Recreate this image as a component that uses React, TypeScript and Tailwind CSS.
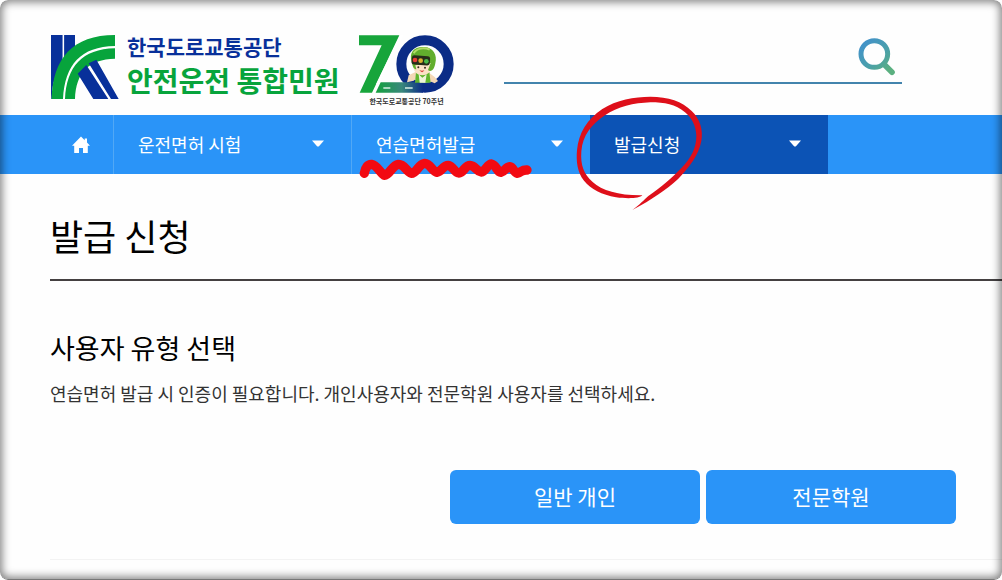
import React from 'react';

function KoroadMark() {
  return (
    <svg viewBox="33 44 204 192" className="h-16 w-[68px] shrink-0" aria-hidden="true">
      <path d="M33 44H67V236H33ZM73 44H105V150H73Z" fill="#08309a" />
      <path d="M35 238C39 120 92 49 229 46V120C150 122 108 160 104 238Z" fill="#fff" />
      <path d="M33 44H67V128C53 153 42 178 33 208ZM73 44H105V84C92 94 82 105 73 118Z" fill="#08309a" />
      <path d="M35 236C38 115 98 44 225 44V77C122 79 75 132 69 236Z" fill="#07a43c" />
      <path d="M75 236C80 139 126 86 225 84V115C146 117 108 156 105 236Z" fill="#07a43c" />
      <path d="M113 160L139 134L205 236H160ZM146 129L169 118L236 236H213Z" fill="#08309a" />
    </svg>
  );
}

function AnniversaryMark() {
  return (
    <svg viewBox="43 42 285 174" className="h-[58px] w-[95px]" aria-hidden="true">
      <defs>
        <linearGradient id="foot" x1="0" x2="1">
          <stop offset="0" stopColor="#12a13c" />
          <stop offset="0.55" stopColor="#3a887c" />
          <stop offset="1" stopColor="#0b2c86" />
        </linearGradient>
      </defs>
      <circle cx="241" cy="129" r="71" fill="none" stroke="#0b2c86" strokeWidth="30" />
      <path d="M43 43H164L82 215H45L111 73H43Z" fill="#17a53b" />
      <path d="M166 43H176L104 190H94Z" fill="#fff" />
      <path d="M108 184H235V215H93Z" fill="url(#foot)" />
      <path d="M116 201H137M181 201H204" stroke="#d8efe3" strokeWidth="5" />
      <path d="M214 152L192 163L187 184L207 179L218 169ZM253 155L270 168L280 180L270 187L248 177Z" fill="#f4d8b6" />
      <path d="M214 153H254L258 185H211Z" fill="#61b62e" />
      <path d="M222 160L233 170L246 160L242 185H225Z" fill="#eef4d9" />
      <ellipse cx="233" cy="138" rx="27" ry="25" fill="#fbe2c6" />
      <path d="M202 126C190 92 211 76 238 78C265 78 279 102 272 127C268 151 256 153 250 147L258 126L212 133L215 145C207 145 204 137 202 126Z" fill="#62ae2d" />
      <path d="M207 97C216 81 238 79 255 86" fill="none" stroke="#b3dc68" strokeWidth="6" />
      <rect x="201" y="104" width="55" height="28" rx="8" fill="#272d19" transform="rotate(4 228 118)" />
      <circle cx="211" cy="117" r="7" fill="#e83c35" />
      <circle cx="228" cy="119" r="7" fill="#dbb22f" />
      <circle cx="245" cy="121" r="7" fill="#48b847" />
      <circle cx="221" cy="139" r="3" fill="#382c22" />
      <circle cx="241" cy="140" r="3" fill="#382c22" />
      <path d="M224 147Q232 151 239 147Q233 160 224 147Z" fill="#d6413b" />
    </svg>
  );
}

function Caret() {
  return (
    <svg viewBox="0 0 12 7" className="h-[7px] w-3" fill="#fff" aria-hidden="true">
      <path d="M0 0.5H12L7 6.2Q6 7 5 6.2Z" />
    </svg>
  );
}

function MenuButton({ label, active, divided }: { label: string; active?: boolean; divided?: boolean }) {
  return (
    <button
      type="button"
      aria-haspopup="menu"
      className={`flex h-full w-full items-center justify-between pr-[27px] pb-0.5 pl-6 text-[18px] leading-6 text-white ${
        active ? 'bg-[#0c53b5]' : ''
      } ${divided ? 'border-r border-[#51a8f5]' : ''}`}
    >
      <span>{label}</span>
      <Caret />
    </button>
  );
}

function Scribble() {
  return (
    <svg
      viewBox="30 189 540 90"
      className="pointer-events-none absolute top-[38px] left-[3px] z-10 h-[30px] w-[180px]"
      aria-hidden="true"
    >
      <path
        d="M58 250C61 231 70 222 80 223C96 225 103 246 118 256C134 255 141 226 160 223C179 222 184 246 199 250C216 250 220 222 239 220C257 221 261 244 276 247C291 245 294 226 309 226C325 228 327 247 341 249C356 248 360 226 375 226C391 227 394 244 408 246C423 244 426 222 440 222C453 224 456 246 468 247C480 245 482 231 494 230C506 231 505 248 517 250C529 247 530 239 546 240"
        fill="none"
        stroke="#f20a12"
        strokeWidth="28"
        strokeLinecap="round"
        strokeLinejoin="round"
      />
    </svg>
  );
}

function HandCircle() {
  return (
    <svg
      viewBox="0 0 420 375"
      className="pointer-events-none absolute -top-[25px] -left-[25px] z-10 h-[125px] w-[140px]"
      aria-hidden="true"
    >
      <path
        fill="#de0f1a"
        d="M232 316C224 325 190 327 153 322C111 314 77 297 57 272C37 248 33 213 36 181C41 129 66 88 112 57C154 30 208 20 256 20C310 20 352 34 380 63C405 87 415 119 409 153C401 195 374 231 340 266C302 300 263 327 202 360C225 344 237 329 250 318C291 290 322 262 350 233C379 202 394 174 394 137C393 108 381 84 360 67C331 43 299 37 256 37C207 39 157 50 120 76C79 104 53 136 49 184C46 225 56 253 83 276C111 302 164 317 232 316Z"
      />
    </svg>
  );
}

export default function App() {
  return (
    <div className="relative flex min-h-screen flex-col overflow-hidden rounded-[8px] bg-[#fefefe] font-['Noto_Sans_CJK_KR','Noto_Sans',sans-serif] text-black">
      <header className="flex h-[115px] items-start pt-[35px] pr-[100px] pl-[51px]">
        <a href="#" className="flex w-[307px] shrink-0 items-start gap-2 font-bold whitespace-nowrap">
          <KoroadMark />
          <span className="flex flex-col">
            <span className="text-[21px] leading-[22px] text-[#08309a]">한국도로교통공단</span>
            <span className="text-[28px] leading-[46px] text-[#07a43c]">안전운전 통합민원</span>
          </span>
        </a>
        <a href="#" className="flex shrink-0 flex-col items-center pl-px">
          <AnniversaryMark />
          <span className="text-[7px] leading-4 font-bold text-[#333]">한국도로교통공단 70주년</span>
        </a>
        <form className="ml-[50px] flex h-[49px] flex-1 items-start border-b-2 border-[#4384ad]" onSubmit={(e) => e.preventDefault()}>
          <input type="search" aria-label="검색" className="h-11 min-w-0 flex-1 bg-transparent text-[18px] outline-none" />
          <button type="submit" aria-label="검색" className="mt-[3px] mr-[6px]">
            <svg viewBox="0 0 114 114" className="h-[38px] w-[38px]" fill="none" aria-hidden="true">
              <defs>
                <linearGradient id="lens" x1="15" y1="20" x2="90" y2="100" gradientUnits="userSpaceOnUse">
                  <stop offset="0" stopColor="#4393c7" />
                  <stop offset="0.55" stopColor="#4aa0a9" />
                  <stop offset="1" stopColor="#5bb080" />
                </linearGradient>
              </defs>
              <circle cx="49" cy="48" r="40" stroke="url(#lens)" strokeWidth="15" />
              <path d="M78 79L102 103" stroke="url(#lens)" strokeWidth="17" strokeLinecap="round" />
            </svg>
          </button>
        </form>
      </header>

      <nav className="flex h-[59px] bg-[#2a94f8]">
        <a href="#" aria-label="홈" className="flex w-[114px] shrink-0 items-center border-r border-[#51a8f5] pl-[72px]">
          <svg viewBox="0 0 18 18" className="h-[18px] w-[18px]" fill="#fff" aria-hidden="true">
            <path d="M9 0.5L12.7 4.2V2.5H15V6.5L18 9.7H15.8V17H11V12H7V17H2.2V9.7H0Z" />
          </svg>
        </a>
        <div className="w-[238px]">
          <MenuButton label="운전면허 시험" divided />
        </div>
        <div className="relative w-[238px]">
          <MenuButton label="연습면허발급" />
          <Scribble />
        </div>
        <div className="relative w-[238px]">
          <MenuButton label="발급신청" active />
          <HandCircle />
        </div>
      </nav>

      <main className="pl-[50px]">
        <h1 className="border-b-2 border-[#444041] pt-[34px] pb-[17px] text-[36px] leading-[54px] font-normal">발급 신청</h1>
        <section className="pt-[47px]">
          <h2 className="text-[27px] leading-10 font-normal">사용자 유형 선택</h2>
          <p className="mt-[11px] text-[18px] leading-7 text-[#333]">
            연습면허 발급 시 인증이 필요합니다. 개인사용자와 전문학원 사용자를 선택하세요.
          </p>
          <div className="mt-[63px] mr-[46px] flex justify-end gap-1.5">
            <button type="button" className="h-[54px] w-[250px] rounded-[6px] bg-[#2a94f8] text-[21px] text-white">
              일반 개인
            </button>
            <button type="button" className="h-[54px] w-[250px] rounded-[6px] bg-[#2a94f8] text-[21px] text-white">
              전문학원
            </button>
          </div>
        </section>
        <hr className="mt-[35px] border-[#f3f3f3]" />
      </main>

      <div className="pointer-events-none absolute inset-0 z-20 rounded-[8px] border-b border-[#777] shadow-[inset_0_0_8px_2px_rgba(0,0,0,0.5)]" />
    </div>
  );
}
